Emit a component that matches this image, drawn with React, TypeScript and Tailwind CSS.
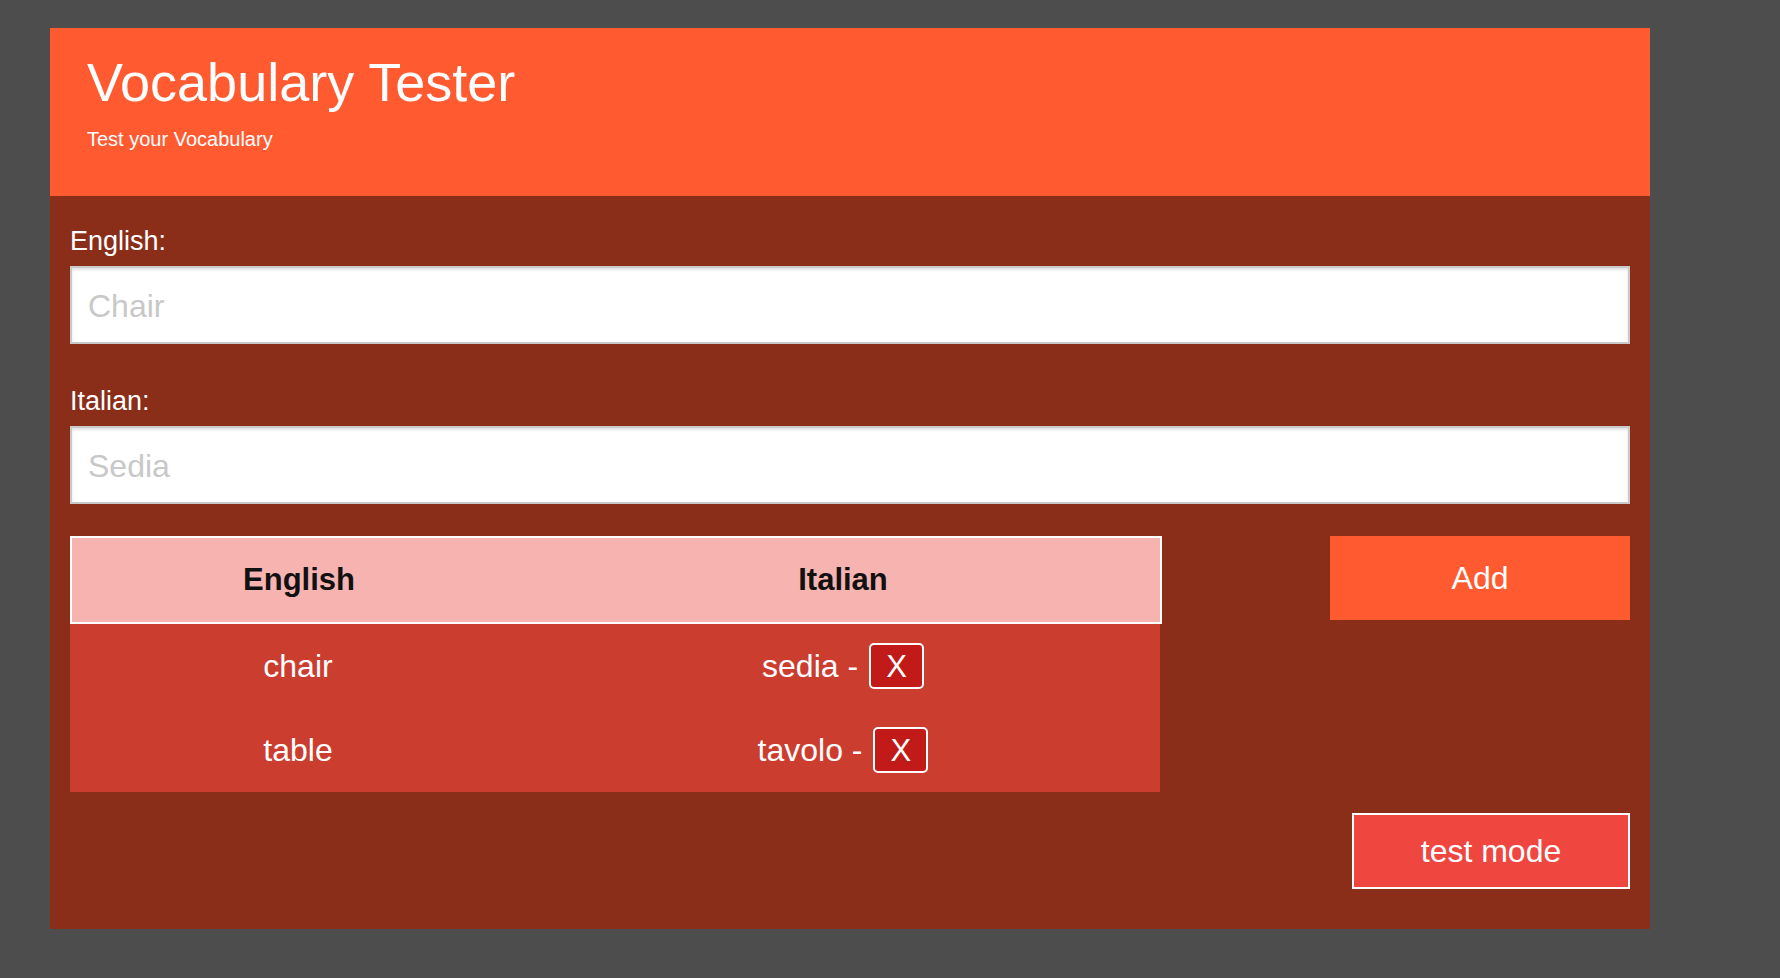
import React from "react";

const rows = [
  { en: "chair", it: "sedia" },
  { en: "table", it: "tavolo" },
];

export default function App() {
  return (
    <div
      className="min-h-screen w-full bg-[#4d4d4d] pt-[28px] pl-[50px]"
      style={{ fontFamily: '"Liberation Sans", Arial, Helvetica, sans-serif' }}
    >
      <div className="w-[1600px] bg-[#8a2e19]">
        {/* Header */}
        <div className="h-[168px] bg-[#ff5a30] px-[37px] pt-[27px] text-white">
          <h1 className="text-[54px] leading-[54px] font-normal">Vocabulary Tester</h1>
          <p className="mt-[20px] text-[20px] leading-none">Test your Vocabulary</p>
        </div>

        {/* Body */}
        <div className="px-[20px] pt-[32px] pb-[40px]">
          <label className="block text-[27px] leading-none text-white">English:</label>
          <input
            className="mt-[11px] block h-[78px] w-full border-2 border-[#c9c9c9] bg-white pl-[16px] pt-[3px] text-[32px] text-[#333] shadow-[inset_0_2px_3px_rgba(0,0,0,0.12)] outline-none placeholder:text-[#c8c8c8]"
            placeholder="Chair"
          />
          <label className="mt-[44px] block text-[27px] leading-none text-white">Italian:</label>
          <input
            className="mt-[11px] block h-[78px] w-full border-2 border-[#c9c9c9] bg-white pl-[16px] pt-[3px] text-[32px] text-[#333] shadow-[inset_0_2px_3px_rgba(0,0,0,0.12)] outline-none placeholder:text-[#c8c8c8]"
            placeholder="Sedia"
          />

          <div className="mt-[32px] flex items-start justify-between">
            <div className="w-[1092px]">
              <div className="flex h-[88px] items-center border-2 border-white bg-[#f7b3b0] text-[31px] font-bold text-[#111]">
                <div className="w-[454px] text-center">English</div>
                <div className="flex-1 text-center">Italian</div>
              </div>
              <div className="w-[1090px] bg-[#cb3d2f] text-[32px] text-white">
                {rows.map((r) => (
                  <div key={r.en} className="flex h-[84px] items-center">
                    <div className="w-[456px] text-center">{r.en}</div>
                    <div className="flex flex-1 items-center justify-center">
                      <span className="whitespace-pre">{r.it} - </span>
                      <button className="ml-[2px] flex h-[46px] w-[55px] items-center justify-center rounded-[5px] border-2 border-white bg-[#c11a18] text-[31px] leading-none text-white">
                        X
                      </button>
                    </div>
                  </div>
                ))}
              </div>
            </div>
            <button className="h-[84px] w-[300px] bg-[#ff5a30] text-[32px] text-white">Add</button>
          </div>

          <div className="mt-[21px] flex justify-end">
            <button className="h-[76px] w-[278px] border-2 border-white bg-[#f04640] text-[32px] text-white">
              test mode
            </button>
          </div>
        </div>
      </div>
    </div>
  );
}
